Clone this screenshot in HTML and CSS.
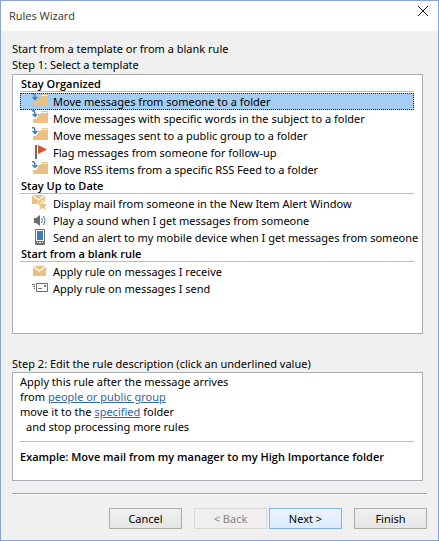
FILE: index.html
```html
<!DOCTYPE html>
<html lang="en">
<head>
    <meta charset="UTF-8">
    <meta name="viewport" content="width=device-width, initial-scale=1.0">
    <title>Rules Wizard</title>
    <link rel="stylesheet" href="styles.css">
</head>
<body>
    <!-- Shared icons -->
    <svg class="sprite" aria-hidden="true">
        <symbol id="icon-folder" viewBox="0 0 17 17">
            <path fill="#e9c283" d="M1 9h3l2-3V4h2l2-1h6v10H1z"/>
            <path fill="#e9c283" d="M10 1h5l1 1v1H9z"/>
            <path stroke="#fff" d="M10 2.500h5"/>
            <path fill="none" stroke="#3f7cb5" stroke-width="1.500" d="M0 .7h1.500Q3 1 3 6M.5 4L3 6.500 5.300 4"/>
        </symbol>
        <symbol id="icon-flag" viewBox="0 0 17 17">
            <path fill="#6d6d6d" d="M3 1h2v14H3z"/>
            <path fill="#d9532c" d="M6 1l9 4.500L6 10z"/>
        </symbol>
        <symbol id="icon-mail-star" viewBox="0 0 17 17">
            <path fill="#e9c283" d="M0 0h13v6l-3 3H0z"/>
            <path fill="none" stroke="#fff" stroke-width="1.200" d="M0 0l6.500 5L13 0"/>
            <path fill="#e9c283" stroke="#fff" stroke-width=".7" d="M10.500 5l1.500 4h4l-3 2.500 1.200 4.300-3.700-2.500-3.700 2.500L8 11.500 5 9h4z"/>
        </symbol>
        <symbol id="icon-sound" viewBox="0 0 17 17">
            <path fill="#6d6d6d" d="M2 6h2l4-3v11l-4-3H2z"/>
            <path fill="none" stroke="#3f7cb5" d="M9.500 6q1.500 2.500 0 5M11.500 4q3 4.500 0 9"/>
        </symbol>
        <symbol id="icon-phone" viewBox="0 0 17 17">
            <rect x="3" y="0" width="10" height="16" rx="1" fill="#6d6d6d"/>
            <path fill="#fff" d="M4 1h8v11H4zM5 13h1v1H5zM7 13h2v1H7zM10 13h1v1h-1z"/>
            <path fill="#3f7cb5" d="M5 2h6v9H5z"/>
        </symbol>
        <symbol id="icon-mail" viewBox="0 0 17 17">
            <path fill="#e9c283" d="M1 3h13v10H1z"/>
            <path fill="none" stroke="#fff" stroke-width="1.200" d="M1 3l6.500 5L14 3"/>
        </symbol>
        <symbol id="icon-send" viewBox="0 0 17 17">
            <path fill="#fff" stroke="#6d6d6d" d="M4.500 3.500h11v8h-11z"/>
            <path stroke="#6d6d6d" d="M0 4.500h3M1 6.500h2M2 8.500h1M6 8.500h4"/>
            <path fill="#3f7cb5" d="M12 5h2v2h-2z"/>
        </symbol>
    </svg>

    <div class="window">
        <header class="title-bar">
            <h1>Rules Wizard</h1>
            <button class="close" type="button" aria-label="Close">
                <svg viewBox="0 0 10 10"><path d="M0 0l10 10M10 0L0 10"/></svg>
            </button>
        </header>

        <main class="content">
            <p>Start from a template or from a blank rule</p>
            <p id="step1">Step 1: Select a template</p>

            <div class="templates" role="listbox" aria-labelledby="step1">
                <h2>Stay Organized</h2>
                <ul>
                    <li class="selected" role="option" aria-selected="true"><svg><use href="#icon-folder"/></svg>Move messages from someone to a folder</li>
                    <li role="option"><svg><use href="#icon-folder"/></svg>Move messages with specific words in the subject to a folder</li>
                    <li role="option"><svg><use href="#icon-folder"/></svg>Move messages sent to a public group to a folder</li>
                    <li role="option"><svg><use href="#icon-flag"/></svg>Flag messages from someone for follow-up</li>
                    <li role="option"><svg><use href="#icon-folder"/></svg>Move RSS items from a specific RSS Feed to a folder</li>
                </ul>
                <h2>Stay Up to Date</h2>
                <ul>
                    <li role="option"><svg><use href="#icon-mail-star"/></svg>Display mail from someone in the New Item Alert Window</li>
                    <li role="option"><svg><use href="#icon-sound"/></svg>Play a sound when I get messages from someone</li>
                    <li role="option"><svg><use href="#icon-phone"/></svg>Send an alert to my mobile device when I get messages from someone</li>
                </ul>
                <h2>Start from a blank rule</h2>
                <ul>
                    <li role="option"><svg><use href="#icon-mail"/></svg>Apply rule on messages I receive</li>
                    <li role="option"><svg><use href="#icon-send"/></svg>Apply rule on messages I send</li>
                </ul>
            </div>

            <p>Step 2: Edit the rule description (click an underlined value)</p>

            <div class="description">
                <p>Apply this rule after the message arrives</p>
                <p>from <a href="#people">people or public group</a></p>
                <p>move it to the <a href="#folder">specified</a> folder</p>
                <p class="indent">and stop processing more rules</p>
                <p class="example">Example: Move mail from my manager to my High Importance folder</p>
            </div>
        </main>

        <footer class="buttons">
            <button class="btn" type="button">Cancel</button>
            <div class="btn-pair">
                <button class="btn" type="button" disabled>&lt; Back</button>
                <button class="btn btn-next" type="button">Next &gt;</button>
            </div>
            <button class="btn" type="button">Finish</button>
        </footer>
    </div>
</body>
</html>
```
FILE: styles.css
```css
* {
    box-sizing: border-box;
}

body {
    margin: 0;
    font-family: "Noto Sans", "Open Sans", sans-serif;
    font-size: 11px;
    line-height: 16px;
    color: #000;
}

h1, h2, p, ul {
    margin: 0;
    padding: 0;
}

.sprite {
    display: none;
}

.window {
    display: flex;
    flex-direction: column;
    min-height: 100vh;
    background-color: #f0f0f0;
    border: 1px solid #8aa5d3;
}

.title-bar {
    display: flex;
    justify-content: space-between;
    align-items: flex-start;
    height: 30px;
    padding: 0 9px 0 8px;
    background-color: #fff;
}

.title-bar h1 {
    font-family: "Open Sans", "Noto Sans", sans-serif;
    font-size: 11px;
    font-weight: normal;
    line-height: 30px;
    color: #333;
}

.close {
    padding: 5px 1px;
    border: none;
    background: none;
}

.close svg {
    display: block;
    width: 10px;
    height: 10px;
    overflow: visible;
    stroke: #111;
}

.content {
    flex: 1;
    display: flex;
    flex-direction: column;
    padding: 10px 15px 0 11px;
}

.templates {
    flex: 1;
    margin: 1px 0 22px;
    padding: 1px 8px 1px 7px;
    background-color: #fff;
    border: 1px solid #abadb3;
}

.templates h2 {
    margin-bottom: 1px;
    padding-left: 1px;
    font-family: "Open Sans", "Noto Sans", sans-serif;
    font-size: 11px;
    font-weight: 600;
    line-height: 15px;
    border-bottom: 1px solid #bcbcbc;
}

.templates ul {
    list-style: none;
}

.templates li {
    display: flex;
    align-items: center;
    height: 17px;
    padding-left: 12px;
    white-space: nowrap;
}

.templates li.selected {
    background-color: #a6cdf2;
    outline: 1px dotted #222;
    outline-offset: -1px;
}

.templates svg {
    flex: none;
    width: 17px;
    height: 17px;
    margin-right: 4px;
}

.description {
    height: 109px;
    padding: 1px 8px 1px 7px;
    line-height: 15px;
    background-color: #fff;
    border: 1px solid #abadb3;
}

.description a {
    color: #3664a2;
}

.description .indent {
    padding-left: 6px;
}

.description .example {
    margin-top: 7px;
    padding-top: 7px;
    font-family: "Open Sans", "Noto Sans", sans-serif;
    font-weight: 600;
    border-top: 1px solid #bcbcbc;
}

.buttons {
    display: flex;
    justify-content: flex-end;
    gap: 12px;
    margin: 12px 11px 0;
    padding: 14px 0 11px;
    border-top: 1px solid #a0a0a0;
    box-shadow: inset 0 1px #fff;
}

.btn-pair {
    display: flex;
    gap: 2px;
}

.btn {
    width: 73px;
    height: 21px;
    padding: 0;
    font-family: inherit;
    font-size: 11px;
    line-height: 19px;
    color: #000;
    background: linear-gradient(#f0f0f0, #e5e5e5);
    border: 1px solid #acacac;
}

.btn:disabled {
    color: #838383;
    background: #efefef;
    border-color: #d9d9d9;
}

.btn-next {
    background: linear-gradient(#ecf4fc, #dcecfc);
    border-color: #7eb4ea;
}
```
